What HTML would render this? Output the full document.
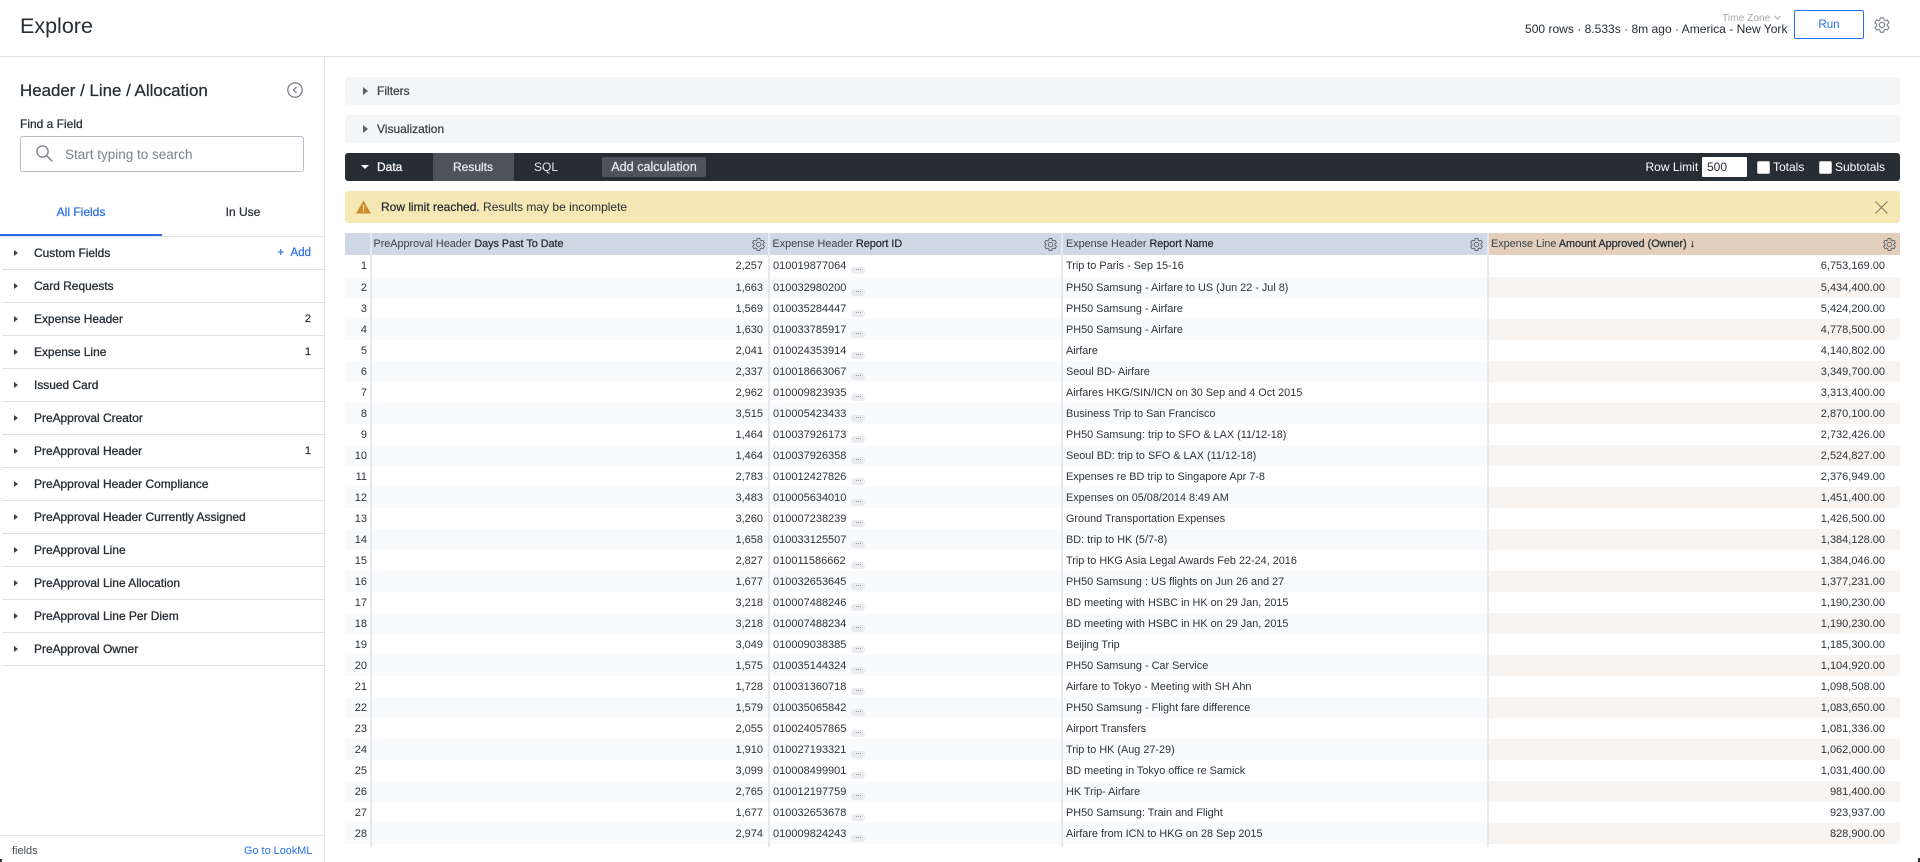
<!DOCTYPE html>
<html><head><meta charset="utf-8"><style>
html,body{margin:0;padding:0;width:1920px;height:862px;overflow:hidden;background:#fff}
body{position:relative;font-family:"Liberation Sans",sans-serif;color:#262d33;font-size:11px}
.a{position:absolute;white-space:nowrap}
.m{-webkit-text-stroke:.25px currentColor}
.blue{color:#2a6fe8}
.f{position:absolute;left:2px;width:322px;height:32px;border-bottom:1px solid #dee1e5}
.f i{position:absolute;left:12px;top:13px;border-left:4px solid #3c4148;border-top:3.5px solid transparent;border-bottom:3.5px solid transparent}
.f b{position:absolute;left:32px;top:0;line-height:33px;font-weight:400;font-size:11.95px;-webkit-text-stroke:.3px #262d33;white-space:nowrap}
.f u{position:absolute;right:13px;top:0;line-height:33px;text-decoration:none;font-size:11px;-webkit-text-stroke:.2px #262d33}
.p{position:absolute;left:345px;width:1555px;height:28px;background:#f4f5f7;border-radius:3px}
.p i{position:absolute;left:18px;top:10px;border-left:5px solid #5a6068;border-top:4px solid transparent;border-bottom:4px solid transparent}
.p b{position:absolute;left:32px;top:0;line-height:28px;font-weight:400;font-size:12px;color:#3c4148;-webkit-text-stroke:.25px #3c4148}
.h{position:absolute;top:233px;height:22px;line-height:22px;background:#cfd9e6;font-size:10.8px;color:#3a414a;white-space:nowrap}
.h b{font-weight:400;color:#262d33;-webkit-text-stroke:.25px #262d33}
.h svg{position:absolute;top:4px;width:15px;height:15px}
#t{position:absolute;left:345px;top:255px;width:1555px}
.r{position:relative;height:21px;line-height:22px;font-size:11px;color:#2c333a}
.r:first-child{height:22px;line-height:23px}
.r:nth-child(even){background:#f9fafc}
.r>span{position:absolute;top:0;white-space:nowrap;z-index:1}
.r>span:nth-child(1){right:1533px}
.r>span:nth-child(2){right:1137px}
.r>span:nth-child(3){left:428px}
.r>span:nth-child(4){left:721px;font-size:10.85px}
.r>span:nth-child(5){right:15px}
.r:after{content:"";position:absolute;left:1143px;top:0;bottom:0;width:412px;background:transparent}
.r:nth-child(even):after{background:#f7f4f1}
.r em{position:absolute;left:78px;top:12px;width:13.5px;height:7px;border-radius:3.5px;background:#e9ebee;font-style:normal}
.r em:after{content:"";position:absolute;left:4.5px;top:2px;width:1px;height:1px;background:#999;box-shadow:2px 0 #999,4px 0 #999}
.v{position:absolute;top:233px;height:614px;width:1.5px;background:#e6e9ed}
.cb{position:absolute;top:161px;width:11px;height:11px;background:#fff;border-radius:2px;border:1px solid #c8ccd0}
</style></head><body>
<svg width="0" height="0" style="position:absolute"><defs><symbol id="g" viewBox="0 0 24 24"><path fill="none" stroke="currentColor" stroke-width="1.5" d="M19.14 12.94c.04-.3.06-.61.06-.94 0-.32-.02-.64-.07-.94l2.03-1.58a.49.49 0 0 0 .12-.61l-1.92-3.32a.488.488 0 0 0-.59-.22l-2.39.96c-.5-.38-1.03-.7-1.62-.94l-.36-2.54a.484.484 0 0 0-.48-.41h-3.84c-.24 0-.43.17-.47.41l-.36 2.54c-.59.24-1.13.57-1.62.94l-2.39-.96c-.22-.08-.47 0-.59.22L2.74 8.87c-.12.21-.08.47.12.61l2.03 1.58c-.05.3-.09.63-.09.94s.02.64.07.94l-2.03 1.58a.49.49 0 0 0-.12.61l1.92 3.32c.12.22.37.29.59.22l2.39-.96c.5.38 1.03.7 1.62.94l.36 2.54c.05.24.24.41.48.41h3.84c.24 0 .44-.17.47-.41l.36-2.54c.59-.24 1.13-.56 1.62-.94l2.39.96c.22.08.47 0 .59-.22l1.92-3.32c.12-.22.07-.47-.12-.61l-2.01-1.58zM12 15.6c-1.98 0-3.6-1.62-3.6-3.6s1.62-3.6 3.6-3.6 3.6 1.62 3.6 3.6-1.62 3.6-3.6 3.6z"/></symbol></defs></svg>

<div class="a" style="left:20px;top:12px;font-size:21.5px;line-height:28px;color:#262d33">Explore</div>
<div class="a" style="left:0;top:56px;width:1920px;height:1px;background:#dee1e5"></div>
<div class="a" style="left:324px;top:57px;width:1px;height:805px;background:#dee1e5"></div>

<div class="a" style="left:1722px;top:12px;font-size:10.2px;line-height:13px;color:#a5a8ae">Time Zone</div>
<svg class="a" style="left:1774px;top:15px" width="7" height="5" viewBox="0 0 7 5"><path d="M.5 1l3 3 3-3" fill="none" stroke="#a5a8ae"/></svg>
<div class="a" style="left:1525px;top:22px;font-size:12.05px;line-height:15px;color:#262d33">500 rows · 8.533s · 8m ago · America - New York</div>
<div class="a blue" style="left:1794px;top:10px;width:68px;height:27px;border:1px solid #2a6fe8;border-radius:2px;text-align:center;line-height:27px;font-size:11.6px">Run</div>
<svg class="a" style="left:1873px;top:16px;color:#7b8188" width="18" height="18"><use href="#g"/></svg>

<div class="a m" style="left:20px;top:80px;font-size:16.9px;line-height:22px">Header / Line / Allocation</div>
<svg class="a" style="left:287px;top:82px" width="16" height="16" viewBox="0 0 16 16"><circle cx="8" cy="8" r="7.2" fill="none" stroke="#666c74" stroke-width="1.1"/><path d="M9.5 5L6.5 8l3 3" fill="none" stroke="#666c74" stroke-width="1.1"/></svg>
<div class="a m" style="left:20px;top:117px;font-size:12px;line-height:15px">Find a Field</div>
<div class="a" style="left:20px;top:136px;width:282px;height:34px;border:1px solid #b8bcc4;border-radius:3px"></div>
<svg class="a" style="left:35px;top:144px" width="19" height="19" viewBox="0 0 19 19"><circle cx="7.5" cy="7.5" r="5.6" fill="none" stroke="#7f868e" stroke-width="1.4"/><path d="M11.7 11.7L17.4 17.4" stroke="#7f868e" stroke-width="1.5"/></svg>
<div class="a" style="left:65px;top:147px;font-size:13.5px;line-height:16px;color:#7a828c">Start typing to search</div>

<div class="a blue m" style="left:0;top:205px;width:162px;text-align:center;font-size:12px;line-height:15px">All Fields</div>
<div class="a m" style="left:162px;top:205px;width:162px;text-align:center;font-size:12px;line-height:15px">In Use</div>
<div class="a" style="left:0;top:236px;width:324px;height:1px;background:#dee1e5"></div>
<div class="a" style="left:0;top:234px;width:162px;height:2px;background:#2a6fe8"></div>

<div class="f" style="top:237px"><i></i><b>Custom Fields</b><u class="blue m" style="-webkit-text-stroke:.2px #2a6fe8;font-size:11.5px">+ &nbsp;Add</u></div>
<div class="f" style="top:270px"><i></i><b>Card Requests</b></div>
<div class="f" style="top:303px"><i></i><b>Expense Header</b><u>2</u></div>
<div class="f" style="top:336px"><i></i><b>Expense Line</b><u>1</u></div>
<div class="f" style="top:369px"><i></i><b>Issued Card</b></div>
<div class="f" style="top:402px"><i></i><b>PreApproval Creator</b></div>
<div class="f" style="top:435px"><i></i><b>PreApproval Header</b><u>1</u></div>
<div class="f" style="top:468px"><i></i><b>PreApproval Header Compliance</b></div>
<div class="f" style="top:501px"><i></i><b>PreApproval Header Currently Assigned</b></div>
<div class="f" style="top:534px"><i></i><b>PreApproval Line</b></div>
<div class="f" style="top:567px"><i></i><b>PreApproval Line Allocation</b></div>
<div class="f" style="top:600px"><i></i><b>PreApproval Line Per Diem</b></div>
<div class="f" style="top:633px"><i></i><b>PreApproval Owner</b></div>

<div class="a" style="left:0;top:835px;width:324px;height:1px;background:#dee1e5"></div>
<div class="a" style="left:12px;top:844px;font-size:11px;line-height:14px;color:#444b53">fields</div>
<div class="a blue" style="left:244px;top:844px;font-size:10.9px;line-height:14px">Go to LookML</div>

<div class="p" style="top:77px"><i></i><b>Filters</b></div>
<div class="p" style="top:115px"><i></i><b>Visualization</b></div>

<div class="a" style="left:345px;top:153px;width:1555px;height:28px;background:#262d33;border-radius:3px"></div>
<div class="a" style="left:433px;top:153px;width:81px;height:28px;background:#4c535b"></div>
<div class="a" style="left:361px;top:165px;border-top:4px solid #fff;border-left:4px solid transparent;border-right:4px solid transparent"></div>
<div class="a m" style="left:377px;top:153px;line-height:28px;font-size:12px;color:#fff">Data</div>
<div class="a m" style="left:453px;top:153px;line-height:28px;font-size:12px;color:#e8eaec">Results</div>
<div class="a" style="left:534px;top:153px;line-height:28px;font-size:12px;color:#e8eaec">SQL</div>
<div class="a m" style="left:602px;top:157px;width:104px;height:20px;line-height:20px;text-align:center;font-size:12.6px;background:#4c535b;border-radius:2px;color:#e8eaec">Add calculation</div>
<div class="a" style="left:1645.5px;top:153px;line-height:28px;font-size:12px;color:#fff">Row Limit</div>
<div class="a" style="left:1702px;top:157px;width:40px;height:20px;padding-left:5px;background:#fff;line-height:20px;font-size:12px;border-radius:1px">500</div>
<div class="cb" style="left:1757px"></div>
<div class="a" style="left:1773px;top:153px;line-height:28px;font-size:12px;color:#fff">Totals</div>
<div class="cb" style="left:1819px"></div>
<div class="a" style="left:1835px;top:153px;line-height:28px;font-size:12px;color:#fff">Subtotals</div>

<div class="a" style="left:345px;top:191px;width:1555px;height:32px;background:#f5e8b5;border-radius:3px"></div>
<svg class="a" style="left:356px;top:200px" width="15" height="14" viewBox="0 0 15 14"><path d="M7.5.5L15 13.5H0z" fill="#d08a2a"/><rect x="6.9" y="5" width="1.3" height="4.5" fill="#f5e8b5"/><rect x="6.9" y="10.4" width="1.3" height="1.3" fill="#f5e8b5"/></svg>
<div class="a" style="left:381px;top:199px;line-height:16px;font-size:12px;color:#262d33"><span class="m">Row limit reached.</span> Results may be incomplete</div>
<svg class="a" style="left:1875px;top:201px" width="13" height="13" viewBox="0 0 13 13"><path d="M.5.5l12 12M12.5.5l-12 12" stroke="#7d7a66" stroke-width="1"/></svg>

<div class="h" style="left:345px;width:25px"></div>
<div class="h" style="left:371px;width:397px"><span style="margin-left:2.5px">PreApproval Header <b>Days Past To Date</b></span><svg style="left:380px;color:#5c636b"><use href="#g"/></svg></div>
<div class="h" style="left:769px;width:292px"><span style="margin-left:3.5px">Expense Header <b>Report ID</b></span><svg style="left:273.5px;color:#5c636b"><use href="#g"/></svg></div>
<div class="h" style="left:1062px;width:425px"><span style="margin-left:4px">Expense Header <b>Report Name</b></span><svg style="left:406.5px;color:#5c636b"><use href="#g"/></svg></div>
<div class="h" style="left:1488px;width:412px;background:#e3cfbc"><span style="margin-left:3px;color:#3a414a">Expense Line <b>Amount Approved (Owner) ↓</b></span><svg style="left:394px;color:#5c636b"><use href="#g"/></svg></div>

<div id="t">
<div class="r"><span>1</span><span>2,257</span><span>010019877064<em></em></span><span>Trip to Paris - Sep 15-16</span><span>6,753,169.00</span></div>
<div class="r"><span>2</span><span>1,663</span><span>010032980200<em></em></span><span>PH50 Samsung - Airfare to US (Jun 22 - Jul 8)</span><span>5,434,400.00</span></div>
<div class="r"><span>3</span><span>1,569</span><span>010035284447<em></em></span><span>PH50 Samsung - Airfare</span><span>5,424,200.00</span></div>
<div class="r"><span>4</span><span>1,630</span><span>010033785917<em></em></span><span>PH50 Samsung - Airfare</span><span>4,778,500.00</span></div>
<div class="r"><span>5</span><span>2,041</span><span>010024353914<em></em></span><span>Airfare</span><span>4,140,802.00</span></div>
<div class="r"><span>6</span><span>2,337</span><span>010018663067<em></em></span><span>Seoul BD- Airfare</span><span>3,349,700.00</span></div>
<div class="r"><span>7</span><span>2,962</span><span>010009823935<em></em></span><span>Airfares HKG/SIN/ICN on 30 Sep and 4 Oct 2015</span><span>3,313,400.00</span></div>
<div class="r"><span>8</span><span>3,515</span><span>010005423433<em></em></span><span>Business Trip to San Francisco</span><span>2,870,100.00</span></div>
<div class="r"><span>9</span><span>1,464</span><span>010037926173<em></em></span><span>PH50 Samsung: trip to SFO &amp; LAX (11/12-18)</span><span>2,732,426.00</span></div>
<div class="r"><span>10</span><span>1,464</span><span>010037926358<em></em></span><span>Seoul BD: trip to SFO &amp; LAX (11/12-18)</span><span>2,524,827.00</span></div>
<div class="r"><span>11</span><span>2,783</span><span>010012427826<em></em></span><span>Expenses re BD trip to Singapore Apr 7-8</span><span>2,376,949.00</span></div>
<div class="r"><span>12</span><span>3,483</span><span>010005634010<em></em></span><span>Expenses on 05/08/2014 8:49 AM</span><span>1,451,400.00</span></div>
<div class="r"><span>13</span><span>3,260</span><span>010007238239<em></em></span><span>Ground Transportation Expenses</span><span>1,426,500.00</span></div>
<div class="r"><span>14</span><span>1,658</span><span>010033125507<em></em></span><span>BD: trip to HK (5/7-8)</span><span>1,384,128.00</span></div>
<div class="r"><span>15</span><span>2,827</span><span>010011586662<em></em></span><span>Trip to HKG Asia Legal Awards Feb 22-24, 2016</span><span>1,384,046.00</span></div>
<div class="r"><span>16</span><span>1,677</span><span>010032653645<em></em></span><span>PH50 Samsung : US flights on Jun 26 and 27</span><span>1,377,231.00</span></div>
<div class="r"><span>17</span><span>3,218</span><span>010007488246<em></em></span><span>BD meeting with HSBC in HK on 29 Jan, 2015</span><span>1,190,230.00</span></div>
<div class="r"><span>18</span><span>3,218</span><span>010007488234<em></em></span><span>BD meeting with HSBC in HK on 29 Jan, 2015</span><span>1,190,230.00</span></div>
<div class="r"><span>19</span><span>3,049</span><span>010009038385<em></em></span><span>Beijing Trip</span><span>1,185,300.00</span></div>
<div class="r"><span>20</span><span>1,575</span><span>010035144324<em></em></span><span>PH50 Samsung - Car Service</span><span>1,104,920.00</span></div>
<div class="r"><span>21</span><span>1,728</span><span>010031360718<em></em></span><span>Airfare to Tokyo - Meeting with SH Ahn</span><span>1,098,508.00</span></div>
<div class="r"><span>22</span><span>1,579</span><span>010035065842<em></em></span><span>PH50 Samsung - Flight fare difference</span><span>1,083,650.00</span></div>
<div class="r"><span>23</span><span>2,055</span><span>010024057865<em></em></span><span>Airport Transfers</span><span>1,081,336.00</span></div>
<div class="r"><span>24</span><span>1,910</span><span>010027193321<em></em></span><span>Trip to HK (Aug 27-29)</span><span>1,062,000.00</span></div>
<div class="r"><span>25</span><span>3,099</span><span>010008499901<em></em></span><span>BD meeting in Tokyo office re Samick</span><span>1,031,400.00</span></div>
<div class="r"><span>26</span><span>2,765</span><span>010012197759<em></em></span><span>HK Trip- Airfare</span><span>981,400.00</span></div>
<div class="r"><span>27</span><span>1,677</span><span>010032653678<em></em></span><span>PH50 Samsung: Train and Flight</span><span>923,937.00</span></div>
<div class="r"><span>28</span><span>2,974</span><span>010009824243<em></em></span><span>Airfare from ICN to HKG on 28 Sep 2015</span><span>828,900.00</span></div>
</div>
<div class="v" style="left:370px"></div>
<div class="v" style="left:768px"></div>
<div class="v" style="left:1061px"></div>
<div class="v" style="left:1487px"></div>
<div class="a" style="left:0;top:859px;width:2px;height:3px;background:#333"></div>
<div class="a" style="left:1918px;top:858px;width:2px;height:4px;background:#333"></div>
</body></html>
